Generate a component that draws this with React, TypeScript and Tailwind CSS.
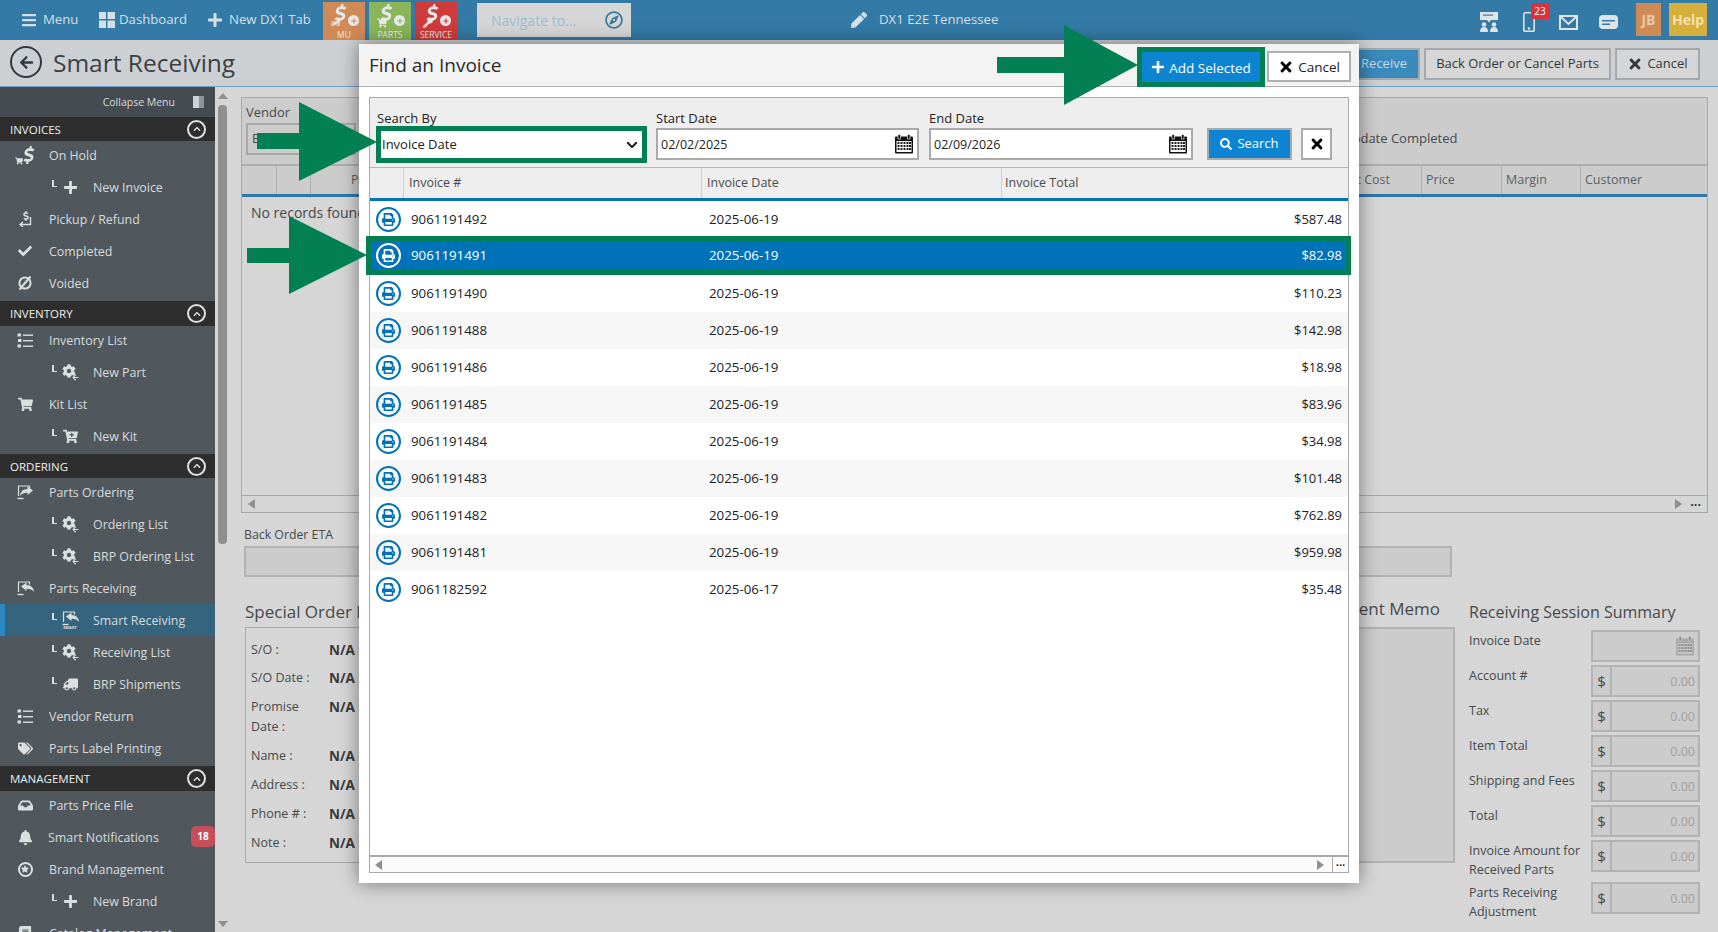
import React from "react";
import {
  FaArrowLeft,
  FaBars,
  FaBell,
  FaBook,
  FaCartPlus,
  FaCheck,
  FaChevronDown,
  FaChevronUp,
  FaCog,
  FaDollarSign,
  FaInbox,
  FaPen,
  FaPlus,
  FaPrint,
  FaRegCompass,
  FaSearch,
  FaStar,
  FaTags,
  FaTimes,
  FaTruck,
  FaShoppingCart,
  FaWrench,
  FaMotorcycle,
} from "react-icons/fa";

const GREEN = "#038053";

type NavItem = {
  label: string;
  icon: React.ReactNode;
  sub?: boolean;
  active?: boolean;
  badge?: string;
  narrow?: boolean;
};

type NavSection = {
  title: string;
  headClass: string;
  items: NavItem[];
};

const GearIcon = () => (
  <span className="relative block w-[17px] h-[17px]">
    <FaCog size={14} />
    <FaArrowLeft size={7} className="absolute right-0 bottom-0" />
  </span>
);

const CircleStar = () => (
  <span className="flex items-center justify-center w-[15px] h-[15px] rounded-full border-2 border-[#dcdfe0]">
    <FaStar size={8} />
  </span>
);

const CartDollar = () => (
  <span className="relative block w-[17px] h-[19px]">
    <FaDollarSign size={18} className="absolute left-[3px] top-0 -skew-x-12" />
    <FaShoppingCart size={8} className="absolute left-[-2px] bottom-0" />
  </span>
);

const PickupIcon = () => (
  <span className="relative block w-[14px] h-[16px]">
    <FaDollarSign size={10} className="absolute left-[3px] top-0" />
    <svg width="14" height="16" viewBox="0 0 14 16" className="absolute inset-0">
      <path d="M12.5 6v7.5H3M5 11l-3 2.5L5 16" fill="none" stroke="currentColor" strokeWidth="1.4" />
    </svg>
  </span>
);

const VoidIcon = () => (
  <svg width="16" height="16" viewBox="0 0 16 16">
    <circle cx="8" cy="8" r="5.6" fill="none" stroke="currentColor" strokeWidth="2" />
    <path d="M2.5 14.5 13.5 1.5" stroke="currentColor" strokeWidth="2" />
  </svg>
);

const ListIcon = () => (
  <svg width="16" height="15" viewBox="0 0 16 15" fill="currentColor">
    <rect x="6" y="1.5" width="10" height="1.4" />
    <rect x="6" y="7" width="10" height="1.4" />
    <rect x="6" y="12.5" width="10" height="1.4" />
    <rect x="0.5" y="0.5" width="3.5" height="3" />
    <rect x="1" y="6" width="3.5" height="3" />
    <rect x="0.5" y="11.5" width="3.5" height="3" />
  </svg>
);

const ScreenArrow = ({ flip }: { flip?: boolean }) => (
  <svg width="17" height="15" viewBox="0 0 17 15">
    <path d="M1.5 11V1h11v2.5" fill="none" stroke="currentColor" strokeWidth="1.2" />
    <path d="M0.5 13.5h6" stroke="currentColor" strokeWidth="1.4" />
    <path
      d={flip ? "M16 5.5 10.5 1.5v2.4C6 4 3.5 6.5 3 11c2-2.6 4.5-3.4 7.5-3.2v2.2z" : "M4 5.5 9.5 1.5v2.4C14 4 16.500 6.500 17 11c-2-2.600-4.500-3.400-7.500-3.200v2.200z"}
      fill="currentColor"
    />
  </svg>
);

const SmartReceive = () => (
  <span className="flex flex-col items-center">
    <ScreenArrow />
    <span className="text-[4px] leading-[4px] font-bold">SMART</span>
  </span>
);

const sections: NavSection[] = [
  {
    title: "INVOICES",
    headClass: "h-6",
    items: [
      { label: "On Hold", icon: <CartDollar /> },
      { label: "New Invoice", icon: <FaPlus size={15} />, sub: true },
      { label: "Pickup / Refund", icon: <PickupIcon /> },
      { label: "Completed", icon: <FaCheck size={14} /> },
      { label: "Voided", icon: <VoidIcon /> },
    ],
  },
  {
    title: "INVENTORY",
    headClass: "h-[25px]",
    items: [
      { label: "Inventory List", icon: <ListIcon /> },
      { label: "New Part", icon: <GearIcon />, sub: true },
      { label: "Kit List", icon: <FaShoppingCart size={15} /> },
      { label: "New Kit", icon: <FaCartPlus size={15} />, sub: true },
    ],
  },
  {
    title: "ORDERING",
    headClass: "h-6",
    items: [
      { label: "Parts Ordering", icon: <ScreenArrow flip /> },
      { label: "Ordering List", icon: <GearIcon />, sub: true },
      { label: "BRP Ordering List", icon: <GearIcon />, sub: true },
      { label: "Parts Receiving", icon: <ScreenArrow /> },
      { label: "Smart Receiving", icon: <SmartReceive />, sub: true, active: true },
      { label: "Receiving List", icon: <GearIcon />, sub: true },
      { label: "BRP Shipments", icon: <FaTruck size={15} className="-scale-x-100" />, sub: true },
      { label: "Vendor Return", icon: <ListIcon /> },
      { label: "Parts Label Printing", icon: <FaTags size={15} /> },
    ],
  },
  {
    title: "MANAGEMENT",
    headClass: "h-[25px]",
    items: [
      { label: "Parts Price File", icon: <FaInbox size={15} /> },
      { label: "Smart Notifications", icon: <FaBell size={15} />, badge: "18", narrow: true },
      { label: "Brand Management", icon: <CircleStar /> },
      { label: "New Brand", icon: <FaPlus size={15} />, sub: true },
      { label: "Catalog Management", icon: <FaBook size={14} /> },
    ],
  },
];

const invoices = [
  ["9061191492", "2025-06-19", "$587.48"],
  ["9061191491", "2025-06-19", "$82.98"],
  ["9061191490", "2025-06-19", "$110.23"],
  ["9061191488", "2025-06-19", "$142.98"],
  ["9061191486", "2025-06-19", "$18.98"],
  ["9061191485", "2025-06-19", "$83.96"],
  ["9061191484", "2025-06-19", "$34.98"],
  ["9061191483", "2025-06-19", "$101.48"],
  ["9061191482", "2025-06-19", "$762.89"],
  ["9061191481", "2025-06-19", "$959.98"],
  ["9061182592", "2025-06-17", "$35.48"],
];

const specialOrder = [
  { label: "S/O :", rowClass: "h-[28px]" },
  { label: "S/O Date :", rowClass: "h-[29px]" },
  { label: "Promise Date :", rowClass: "h-[49px]" },
  { label: "Name :", rowClass: "h-[29px]" },
  { label: "Address :", rowClass: "h-[29px]" },
  { label: "Phone # :", rowClass: "h-[29px]" },
  { label: "Note :", rowClass: "h-[29px]" },
];

const summaryFields = [
  { label: "Account #", rowClass: "h-[35px]" },
  { label: "Tax", rowClass: "h-[35px]" },
  { label: "Item Total", rowClass: "h-[35px]" },
  { label: "Shipping and Fees", rowClass: "h-[35px]" },
  { label: "Total", rowClass: "h-[35px]" },
  { label: "Invoice Amount for Received Parts", rowClass: "h-[42px]" },
  { label: "Parts Receiving Adjustment", rowClass: "h-[35px]" },
];

const CalendarIcon = ({ muted }: { muted?: boolean }) => (
  <svg width="20" height="20" viewBox="0 0 20 20" className="shrink-0">
    <rect x="1" y="2.5" width="18" height="17" fill={muted ? "#a8a8a8" : "#111"} rx="1" />
    <rect x="4" y="0.5" width="2.5" height="4.5" fill={muted ? "#8f8f8f" : "#111"} stroke={muted ? "#ccc" : "#fff"} strokeWidth="0.6" />
    <rect x="13.5" y="0.5" width="2.5" height="4.5" fill={muted ? "#8f8f8f" : "#111"} stroke={muted ? "#ccc" : "#fff"} strokeWidth="0.6" />
    <rect x="2.500" y="7" width="15" height="11" fill={muted ? "#c4c4c4" : "#fff"} />
    {[8, 11, 14].map((y) =>
      [3.5, 6.5, 9.5, 12.5, 15].map((x) => (
        <rect key={`${x}-${y}`} x={x} y={y} width="2" height="2" fill={muted ? "#8f8f8f" : "#222"} />
      ))
    )}
  </svg>
);

const PlusDot = ({ tone }: { tone: string }) => (
  <span className="absolute right-[1px] top-[11px] w-[11px] h-[11px] rounded-full bg-[#e8e8e8] flex items-center justify-center">
    <FaPlus size={6} className={tone} />
  </span>
);

const ShopButton = ({
  color,
  tone,
  label,
  icon,
}: {
  color: string;
  tone: string;
  label: string;
  icon: React.ReactNode;
}) => (
  <div className={`w-[42px] h-[38px] mt-[2px] flex flex-col items-center text-[#e8e8e8] ${color}`}>
    <span className="relative h-[25px] w-[32px] mt-[2px] flex justify-center">
      <FaDollarSign size={19} className="-ml-[7px] -skew-x-12" />
      <span className="absolute left-[3px] bottom-[1px]">{icon}</span>
      <PlusDot tone={tone} />
    </span>
    <span className="text-[8.5px] leading-[9px] mt-px">{label}</span>
  </div>
);

const DashIcon = () => (
  <svg width="16" height="16" viewBox="0 0 16 16" fill="currentColor">
    <rect x="0" y="0" width="7" height="7" />
    <rect x="8.500" y="0" width="7.500" height="7" />
    <rect x="0" y="8.500" width="7" height="7.500" />
    <rect x="8.500" y="8.500" width="7.500" height="7.500" />
  </svg>
);

const NetworkIcon = () => (
  <svg width="20" height="20" viewBox="0 0 20 20" fill="currentColor">
    <rect x="1" y="0" width="18" height="8" />
    <path d="M8 8h4l-2 2.500z" />
    <rect x="4" y="2.500" width="10" height="1.200" fill="#337aa6" />
    <circle cx="5" cy="12.500" r="2.300" />
    <circle cx="15" cy="12.500" r="2.300" />
    <path d="M1 20c0-3.500 1.500-5 4-5s4 1.500 4 5zM11 20c0-3.500 1.500-5 4-5s4 1.500 4 5z" />
  </svg>
);

const PhoneIcon = () => (
  <svg width="12" height="20" viewBox="0 0 12 20">
    <rect x="0.800" y="0.800" width="10.400" height="18.400" rx="1.800" fill="none" stroke="currentColor" strokeWidth="1.600" />
    <circle cx="6" cy="16.500" r="1.200" fill="currentColor" />
  </svg>
);

const MailIcon = () => (
  <svg width="19" height="15" viewBox="0 0 19 15" fill="none" stroke="currentColor" strokeWidth="2">
    <rect x="1" y="1" width="17" height="13" />
    <path d="M2 2l7.500 7L17 2" />
  </svg>
);

const ChatIcon = () => (
  <svg width="19" height="14" viewBox="0 0 19 14">
    <rect x="0" y="0" width="19" height="14" rx="4" fill="currentColor" />
    <rect x="3" y="5" width="13" height="1.500" fill="#337aa6" />
    <rect x="3" y="8.500" width="8" height="1.500" fill="#337aa6" />
  </svg>
);

const TopBar = () => (
  <header className="h-10 shrink-0 bg-[#337aa6] flex items-start text-[#d6dfe5] text-[13.2px]">
    <div className="flex items-center h-10 ml-[21px] gap-[6px] w-[78px]">
      <FaBars size={16} />
      <span>Menu</span>
    </div>
    <div className="flex items-center h-10 gap-1 w-[108px]">
      <DashIcon />
      <span>Dashboard</span>
    </div>
    <div className="flex items-center h-10 gap-[6px] w-[116px]">
      <FaPlus size={16} />
      <span>New DX1 Tab</span>
    </div>
    <div className="flex gap-1">
      <ShopButton color="bg-[#d08a55]" tone="text-[#d08a55]" label="MU" icon={<FaMotorcycle size={9} />} />
      <ShopButton color="bg-[#8ab55a]" tone="text-[#8ab55a]" label="PARTS" icon={<FaShoppingCart size={10} />} />
      <ShopButton color="bg-[#cf3a3a]" tone="text-[#cf3a3a]" label="SERVICE" icon={<FaWrench size={10} />} />
    </div>
    <div className="ml-5 mt-[3px] w-[154px] h-[34px] bg-[#d6d6d6] flex items-center justify-between pl-[14px] pr-2 text-[#9bbdd2] text-[14px]">
      <span>Navigate to...</span>
      <FaRegCompass size={18} className="text-[#35799f]" />
    </div>
    <div className="ml-[220px] flex items-center h-10 gap-[12px]">
      <FaPen size={16} />
      <span>DX1 E2E Tennessee</span>
    </div>
    <div className="ml-auto flex items-start pr-[11px]">
      <div className="h-10 flex items-center mr-[18px] mt-[2px] text-[#dfe4e7]">
        <NetworkIcon />
        <div className="relative ml-[24px]">
          <PhoneIcon />
          <span className="absolute -top-[9px] left-[8px] w-[18px] h-[16px] bg-[#d9343a] text-white text-[10px] leading-[16px] text-center">
            23
          </span>
        </div>
        <span className="ml-[24px]">
          <MailIcon />
        </span>
        <span className="ml-[21px]">
          <ChatIcon />
        </span>
      </div>
      <div className="mt-[3px] h-[33px] w-[25px] bg-[#d08a55] text-[#e8c9a8] font-bold text-[14px] flex items-center justify-center">
        JB
      </div>
      <div className="ml-2 mt-[3px] h-[33px] w-[38px] bg-[#d6ae3a] text-[#efe2b0] font-bold text-[14px] flex items-center justify-center">
        Help
      </div>
    </div>
  </header>
);

const PageHeader = () => (
  <div className="h-[47px] shrink-0 bg-[#cdd0d3] border-b border-[#6fa3c4] flex items-start">
    <div className="ml-[10px] mt-[6px] w-[32px] h-[32px] rounded-full border-2 border-[#33383c] flex items-center justify-center text-[#33383c]">
      <FaArrowLeft size={15} />
    </div>
    <h1 className="ml-[11px] mt-[3px] text-[24.5px] leading-[40px] text-[#3b4045]">Smart Receiving</h1>
    <div className="ml-auto mr-[18px] mt-2 flex gap-1 text-[13px] text-[#33383c]">
      <div className="h-[32px] w-[90px] border-2 border-[#a5a9ab] bg-[#3a8abc] text-[#c5dcea] flex items-center justify-end pr-[11px]">
        Receive
      </div>
      <div className="h-[32px] w-[187px] border-2 border-[#a5a9ab] bg-[#d6d6d6] flex items-center justify-center">
        Back Order or Cancel Parts
      </div>
      <div className="h-[32px] w-[85px] border-2 border-[#a5a9ab] bg-[#d6d6d6] flex items-center justify-center gap-1">
        <FaTimes size={16} />
        <span>Cancel</span>
      </div>
    </div>
  </div>
);

const NavRow = ({ item }: { item: NavItem }) => (
  <div
    className={`relative h-8 flex items-center ${
      item.active ? "bg-[#35647f] border-l-[5px] border-[#2a8ac4]" : ""
    }`}
  >
    {item.sub ? (
      <>
        <span
          className={`h-[7px] w-[5px] border-l-2 border-b border-[#d8dbdc] -mt-[8px] ${
            item.active ? "ml-[47px]" : "ml-[52px]"
          }`}
        />
        <span className="ml-[4px] w-[18px] flex justify-center text-[#dcdfe0]">{item.icon}</span>
        <span className="ml-[14px] pt-[2px]">{item.label}</span>
      </>
    ) : (
      <>
        <span className="ml-[15px] w-[20px] flex justify-center text-[#dcdfe0]">{item.icon}</span>
        <span className={`pt-[2px] ${item.narrow ? "ml-[13px]" : "ml-[14px]"}`}>{item.label}</span>
      </>
    )}
    {item.badge && (
      <span className="absolute right-0 top-[5px] w-[24px] h-[21px] rounded-[5px] bg-[#c64d5a] text-white font-bold text-[10px] flex items-center justify-center">
        {item.badge}
      </span>
    )}
  </div>
);

const Sidebar = () => (
  <aside className="w-[215px] shrink-0 overflow-hidden bg-[#50585e] text-[#d8dbdc] text-[12.4px]">
    <div className="h-[30px] bg-[#454c51] flex items-center justify-end pr-[11px] gap-[18px] text-[10.5px]">
      <span className="pt-[2px]">Collapse Menu</span>
      <span className="w-[11px] h-[12px] bg-[#d0d3d5] border-r-[5px] border-[#8e9498]" />
    </div>
    {sections.map((section) => (
      <div key={section.title}>
        <div className={`${section.headClass} bg-[#2e2e2e] text-[#eeeeee] text-[11.5px] flex items-center justify-between pl-[10px] pr-[9px]`}>
          <span className="pt-px">{section.title}</span>
          <span className="w-[19px] h-[19px] rounded-full border-2 border-[#e0e0e0] flex items-center justify-center">
            <FaChevronUp size={8} />
          </span>
        </div>
        <div className="-mt-[2px] pb-[2px]">
          {section.items.map((item) => (
            <NavRow key={item.label} item={item} />
          ))}
        </div>
      </div>
    ))}
  </aside>
);

const SideScroll = () => (
  <div className="relative w-[25px] shrink-0 bg-[#d6d6d6]">
    <span className="absolute left-[3px] top-[6px] border-x-[5px] border-x-transparent border-b-[6px] border-b-[#8f8f8f]" />
    <div className="absolute left-[3px] top-[18px] w-[9px] h-[439px] rounded-[4px] bg-[#8f8f8f]" />
    <span className="absolute left-[3px] bottom-[5px] border-x-[5px] border-x-transparent border-t-[6px] border-t-[#8f8f8f]" />
  </div>
);

const Backdrop = () => (
  <main className="flex-1 bg-[#d6d6d6] text-[#45494c] text-[12.5px] pt-[10px] overflow-hidden">
    {/* Receiving grid */}
    <section className="ml-[1px] w-[1467px] h-[416px] border border-[#a8a8a8] flex flex-col">
      <div className="h-[66px] shrink-0 bg-[#cccccc] relative">
        <span className="absolute left-[4px] top-[5px] text-[13px]">Vendor</span>
        <div className="absolute left-[4px] top-[25px] w-[110px] h-[32px] border-2 border-[#a8a8a8] pl-[4px] leading-[28px]">
          B
        </div>
        <span className="absolute left-[1101px] top-[31px] text-[13px]">Update Completed</span>
      </div>
      <div className="h-[33px] shrink-0 bg-[#cccccc] border-t-2 border-b-[3px] border-t-[#adadad] border-b-[#2f78a8] flex items-center text-[#5b5f62]">
        <span className="w-[35px] h-full border-r border-[#b0b0b0]" />
        <span className="w-[34px] h-full border-r border-[#b0b0b0]" />
        <span className="w-[110px] pl-[40px]">Part</span>
        <span className="ml-[911px] w-[90px] h-full flex items-center justify-end pr-[31px] border-r border-[#b0b0b0] whitespace-nowrap">
          Unit Cost
        </span>
        <span className="w-[80px] h-full flex items-center pl-[4px] border-r border-[#b0b0b0]">Price</span>
        <span className="w-[79px] h-full flex items-center pl-[4px] border-r border-[#b0b0b0]">Margin</span>
        <span className="pl-[4px]">Customer</span>
      </div>
      <div className="flex-1 pl-[9px] pt-[5px] text-[14px] leading-[22px]">No records found</div>
      <div className="h-[17px] shrink-0 border-t border-[#a8a8a8] flex items-center justify-between px-[6px]">
        <span className="border-y-[5px] border-y-transparent border-r-[7px] border-r-[#8f8f8f]" />
        <div className="flex items-center gap-[8px]">
          <span className="border-y-[5px] border-y-transparent border-l-[7px] border-l-[#8f8f8f]" />
          <span className="font-bold text-[#333] leading-[10px] -mt-[5px]">...</span>
        </div>
      </div>
    </section>

    <div className="ml-[4px] mt-[12px] text-[12.3px] leading-[20px]">Back Order ETA</div>
    <div className="ml-[4px] w-[1208px] h-[31px] mt-[1px] bg-[#cccccc] border-2 border-[#b3b3b3]" />

    <div className="mt-[23px] flex items-start">
      {/* Special order */}
      <div className="ml-[5px] w-[760px]">
        <h2 className="text-[17px] leading-[24px] text-[#45494c]">Special Order Information</h2>
        <div className="mt-[3px] h-[236px] border border-[#a8a8a8] pl-[5px] pt-[9px] text-[12.5px]">
          {specialOrder.map((row) => (
            <div key={row.label} className={`${row.rowClass} flex items-start`}>
              <span className="w-[78px] leading-[20px] pt-[3px]">{row.label}</span>
              <span className="font-bold leading-[20px] pt-[3px] text-[13.5px] text-[#3a3a3a]">N/A</span>
            </div>
          ))}
        </div>
      </div>

      {/* Memo */}
      <div className="ml-[35px] w-[415px]">
        <h2 className="text-[17px] leading-[24px] text-right pr-[15px] -mt-[3px]">Comment Memo</h2>
        <div className="mt-[6px] h-[236px] bg-[#cccccc] border-2 border-[#b3b3b3]" />
      </div>

      {/* Summary */}
      <div className="ml-[14px] w-[231px]">
        <h2 className="text-[16px] leading-[24px]">Receiving Session Summary</h2>
        <div className="mt-[6px] h-[33px] flex text-[12.5px]">
          <span className="w-[122px] leading-[22px]">Invoice Date</span>
          <div className="w-[109px] h-[32px] bg-[#cccccc] border-2 border-[#b3b3b3] flex items-center justify-end pr-[3px]">
            <CalendarIcon muted />
          </div>
        </div>
        <div className="mt-[2px] text-[12.5px]">
          {summaryFields.map((field) => (
            <div key={field.label} className={`${field.rowClass} flex items-start`}>
              <span className="w-[122px] leading-[19px] pt-[1px] pr-[6px]">{field.label}</span>
              <div className="w-[109px] h-[32px] flex border-2 border-[#b3b3b3] bg-[#cccccc]">
                <span className="w-[19px] border-r-2 border-[#b3b3b3] flex items-center justify-center text-[15px]">$</span>
                <span className="flex-1 text-right pr-[3px] leading-[29px] text-[#a0a0a0]">0.00</span>
              </div>
            </div>
          ))}
        </div>
      </div>
    </div>
  </main>
);

const PrintBadge = ({ selected }: { selected: boolean }) => (
  <span
    className={`w-[25px] h-[25px] rounded-full border-[2.5px] flex items-center justify-center ${
      selected ? "border-white text-white" : "border-[#0072b8] text-[#0072b8]"
    }`}
  >
    <FaPrint size={13} />
  </span>
);

const InvoiceModal = () => (
  <div className="absolute left-[359px] top-[44px] w-[1000px] h-[839px] bg-white shadow-[0_0_18px_rgba(0,0,0,0.45)] flex flex-col text-[13px] text-[#222]">
    <div className="h-[43px] shrink-0 bg-[#f3f3f3] border-b border-[#b0b0b0] flex items-center justify-between">
      <h2 className="ml-[10px] text-[19px] text-[#2b2b2b]">Find an Invoice</h2>
      <div className="flex items-start self-start mt-[3px] mr-[8px]">
        <div className="w-[128px] h-[40px] border-[5px] border-[#038053] bg-[#0c84d2] text-white flex items-center justify-center gap-[4px] text-[13.5px]">
          <FaPlus size={14} />
          <span className="pt-[2px]">Add Selected</span>
        </div>
        <div className="ml-[2px] mt-[4px] w-[84px] h-[31px] border-2 border-[#b0b0b0] bg-white flex items-center justify-center gap-1 text-[13.5px]">
          <FaTimes size={16} className="text-black" />
          <span className="pt-[2px]">Cancel</span>
        </div>
      </div>
    </div>

    <div className="mx-[10px] mt-[10px] h-[776px] border border-[#aaaaaa] flex flex-col">
      <div className="h-[70px] shrink-0 bg-[#eeeeee] border-b border-[#b5b5b5] flex items-start pl-[6px] pt-[10px]">
        <div className="w-[271px]">
          <div className="h-[18px] leading-[20px] pl-px">Search By</div>
          <div className="h-[37px] border-[5px] border-[#038053] bg-white flex items-center justify-between pl-px pr-[4px]">
            <span>Invoice Date</span>
            <FaChevronDown size={12} className="text-[#111]" />
          </div>
        </div>
        <div className="ml-[9px] w-[263px]">
          <div className="h-[20px] leading-[20px]">Start Date</div>
          <div className="h-[32px] border-2 border-[#aaaaaa] bg-white flex items-center justify-between pl-[3px] pr-[3px] text-[12.5px]">
            <span className="pt-[2px]">02/02/2025</span>
            <CalendarIcon />
          </div>
        </div>
        <div className="ml-[10px] w-[264px]">
          <div className="h-[20px] leading-[20px]">End Date</div>
          <div className="h-[32px] border-2 border-[#aaaaaa] bg-white flex items-center justify-between pl-[3px] pr-[3px] text-[12.5px]">
            <span className="pt-[2px]">02/09/2026</span>
            <CalendarIcon />
          </div>
        </div>
        <div className="ml-[14px] mt-[20px] w-[85px] h-[32px] border-2 border-[#aaaaaa] bg-[#0c84d2] text-white flex items-center justify-center gap-[5px]">
          <FaSearch size={12} />
          <span>Search</span>
        </div>
        <div className="ml-[9px] mt-[20px] w-[31px] h-[32px] border-2 border-[#aaaaaa] bg-white flex items-center justify-center">
          <FaTimes size={16} className="text-black" />
        </div>
      </div>

      <div className="h-[33px] shrink-0 bg-[#eeeeee] border-b-[3px] border-[#0072b8] flex text-[12.5px] text-[#4a4a4a]">
        <span className="w-[34px] border-r border-[#cfcfcf]" />
        <span className="w-[298px] pl-[5px] leading-[29px] border-r border-[#cfcfcf]">Invoice #</span>
        <span className="w-[300px] pl-[5px] leading-[29px] border-r border-[#cfcfcf]">Invoice Date</span>
        <span className="pl-[3px] leading-[29px]">Invoice Total</span>
      </div>

      <div className="flex-1 text-[13.3px]">
        {invoices.map(([num, date, total], i) => {
          const selected = i === 1;
          return (
            <div
              key={num}
              className={`flex items-center ${
                selected
                  ? "relative -ml-[4px] -mr-[3px] bg-[#0072b8] text-white border-[5px] border-[#038053] h-[39px] -mt-[2px]"
                  : i % 2 === 1
                    ? "h-[37px] bg-[#f7f7f7]"
                    : "h-[37px] bg-white"
              }`}
            >
              <span className={`flex shrink-0 ${selected ? "w-[40px] pl-[5px]" : "w-[41px] pl-[6px]"}`}>
                <PrintBadge selected={selected} />
              </span>
              <span className="w-[298px]">{num}</span>
              <span className="w-[300px]">{date}</span>
              <span className={`flex-1 text-right text-[13px] ${selected ? "pr-[4px]" : "pr-[6px]"}`}>{total}</span>
            </div>
          );
        })}
      </div>

      <div className="h-[17px] shrink-0 border-t-2 border-[#aaaaaa] bg-[#fbfbfb] flex items-center justify-between pl-[5px]">
        <span className="border-y-[5px] border-y-transparent border-r-[7px] border-r-[#8f8f8f]" />
        <div className="flex items-center h-full">
          <span className="border-y-[5px] border-y-transparent border-l-[7px] border-l-[#8f8f8f] mr-[8px]" />
          <span className="w-[16px] h-full border-l border-[#aaaaaa] flex items-center justify-center font-bold text-[11px] leading-[8px] pb-[5px]">
            ...
          </span>
        </div>
      </div>
    </div>
  </div>
);

// callout arrows sit on top of everything, at screen coordinates
const CalloutArrows = () => (
  <svg className="absolute inset-0 w-full h-full pointer-events-none" viewBox="0 0 1718 932">
    <polygon fill={GREEN} points="997,57 1064,57 1064,25 1138,65 1064,105 1064,73 997,73" />
    <polygon fill={GREEN} points="257,133 299,133 299,102 377,142 299,181 299,149 257,149" />
    <polygon fill={GREEN} points="247,248 289,248 289,216 367,255 289,294 289,263 247,263" />
  </svg>
);

export default function App() {
  return (
    <div className="relative w-[1718px] h-[932px] overflow-hidden flex flex-col font-['Open_Sans',sans-serif]">
      <TopBar />
      <PageHeader />
      <div className="flex flex-1 min-h-0">
        <Sidebar />
        <SideScroll />
        <Backdrop />
      </div>
      <InvoiceModal />
      <CalloutArrows />
    </div>
  );
}
